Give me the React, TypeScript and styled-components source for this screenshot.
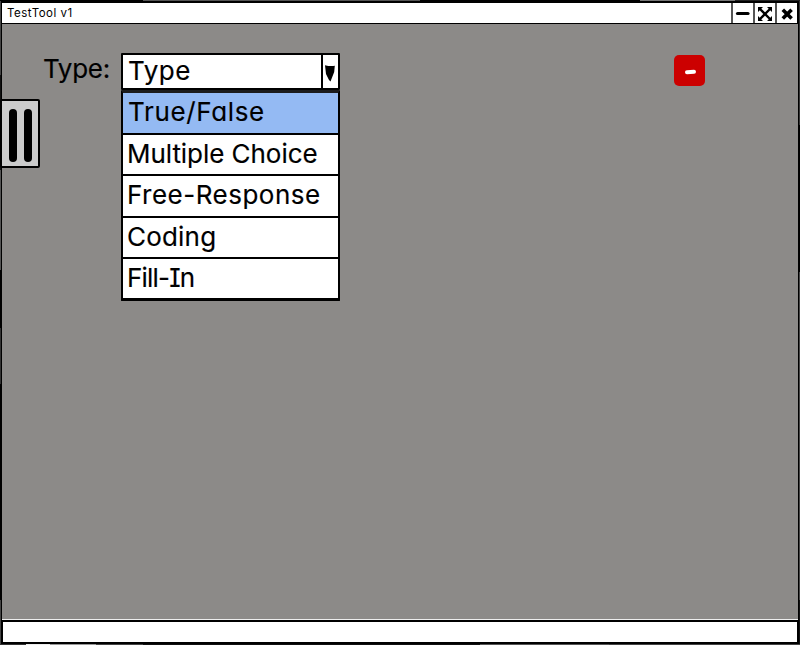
import React from 'react';
import styled, { createGlobalStyle } from 'styled-components';

const ink = '#000';
const surface = '#8c8a88';

const GlobalStyle = createGlobalStyle`
  * { box-sizing: border-box; }
  body {
    margin: 0;
    background: #fff;
    color: ${ink};
    font-family: Inter, Lato, sans-serif;
    font-feature-settings: 'cv11', 'cv08';
  }
`;

/* Uneven pen pressure around the outside of the window outline. */
const Frame = styled.div`
  width: 800px;
  height: 645px;
  padding: 1px;
  background:
    linear-gradient(90deg, #000 0 143px, #555 143px 420px, #000 420px 640px, #777 640px 735px, #222 735px) top / 100% 1px no-repeat,
    linear-gradient(90deg, #333 0 26px, #eee 26px 50px, #999 50px 96px, #444 96px 143px, #111 143px 480px, #555 480px 609px, #444 609px) bottom / 100% 1px no-repeat,
    linear-gradient(#444 0 75px, #111 75px 170px, #555 170px 270px, #000 270px 328px, #333 328px 384px, #000 384px 600px, #444 600px) left / 1px 100% no-repeat,
    linear-gradient(#333 0 125px, #000 125px 272px, #444 272px 600px, #111 600px) right / 1px 100% no-repeat,
    #000;
`;

const Window = styled.div`
  height: 643px;
  display: grid;
  grid-template-rows: 21px 1fr 24px;
  border: solid ${ink};
  border-width: 2px 1px 0;
  background: ${surface};
`;

const TitleBar = styled.header`
  display: flex;
  justify-content: space-between;
  background: #fff;
  border-bottom: 1px solid ${ink};
  border-right: 1px solid ${ink};
`;

const Title = styled.h1`
  margin: 0;
  padding-left: 5px;
  font-size: 11.5px;
  font-weight: 400;
  line-height: 21px;
  letter-spacing: 0.5px;
`;

const WindowButtons = styled.div`
  display: flex;
`;

const WindowButton = styled.button`
  width: 22px;
  padding: 2px 0 0;
  border: 0;
  border-left: 2px solid #555;
  background: #fff;
  display: grid;
  place-items: center;
  svg { display: block; }
`;

const Content = styled.main`
  display: flex;
  align-items: flex-start;
  border-bottom: 1px solid #eee;
`;

const DrawerHandle = styled.button`
  width: 40px;
  height: 69px;
  margin: 75px 0 0 -2px;
  padding: 8px 0 0 7px;
  border: 2px solid ${ink};
  border-radius: 2px;
  background: #cbcbcb;
  display: flex;
  gap: 7px;
`;

const HandleBar = styled.span`
  width: 8px;
  height: 53px;
  border-radius: 4px;
  background: ${ink};
`;

const FieldLabel = styled.label`
  width: 81px;
  margin-top: 29px;
  padding-left: 3px;
  white-space: nowrap;
`;

const SelectBox = styled.div`
  width: 219px;
  margin-top: 29px;
`;

const SelectField = styled.div`
  height: 37px;
  display: flex;
  justify-content: space-between;
  border: 2px solid ${ink};
  border-radius: 1px;
  background: #fff;
`;

const Text = styled.span<{ $tracking?: number }>`
  display: inline-block;
  font-size: 26px;
  line-height: 32px;
  white-space: nowrap;
  letter-spacing: ${({ $tracking = 0 }) => $tracking}px;
  -webkit-text-stroke: 0.15px ${ink};
`;

const SelectValue = styled.div`
  padding: 0 0 0 5px;
`;

const SelectArrow = styled.div`
  width: 17px;
  border-left: 2px solid ${ink};
  padding: 9px 0 0 1px;
  svg { display: block; }
`;

const Options = styled.ul`
  margin: 0;
  padding: 0;
  list-style: none;
  border: solid ${ink};
  border-width: 3px 2px;
  border-top-color: #1c1c1c;
  border-radius: 1px;
  background: #fff;
`;

const Option = styled.li<{ $active?: boolean }>`
  height: 41.6px;
  padding: 3px 0 0;
  padding-left: ${({ $active }) => ($active ? 5 : 4)}px;
  background: ${({ $active }) => ($active ? '#94baf3' : '#fff')};
  border-bottom: 2px solid ${ink};
  &:last-child { height: 38.4px; border-bottom: 0; }
`;

const RemoveButton = styled.button`
  width: 31px;
  height: 31px;
  margin: 31px 93px 0 auto;
  padding: 2px 0 0 1px;
  border: 0;
  border-radius: 5px;
  background: #cc0000;
  display: grid;
  place-items: center;
`;

const MinusMark = styled.span`
  width: 11px;
  height: 4px;
  border-radius: 2px;
  background: #fff;
  transform: rotate(-3deg);
`;

const StatusBar = styled.footer`
  border: solid ${ink};
  border-width: 2px 1px 2px;
  background: #fff;
`;

const options = [
  { label: 'True/False', tracking: 0.65 },
  { label: 'Multiple Choice', tracking: -0.05 },
  { label: 'Free-Response', tracking: 0.5 },
  { label: 'Coding', tracking: 0.2 },
  { label: 'Fill-In', tracking: -0.8 },
];

export default function App() {
  return (
    <>
      <GlobalStyle />
      <Frame>
        <Window>
          <TitleBar>
            <Title>TestTool v1</Title>
            <WindowButtons>
              <WindowButton aria-label="Minimize">
                <svg width="16" height="16" viewBox="0 0 16 16">
                  <path d="M2.5 7.5H13" stroke={ink} strokeWidth="3.2" strokeLinecap="round" />
                </svg>
              </WindowButton>
              <WindowButton aria-label="Maximize">
                <svg width="16" height="16" viewBox="0 0 16 16">
                  <path d="M3 3L13 13M13 3L3 13" stroke={ink} strokeWidth="2.4" />
                  <path d="M1 1H6L1 6ZM15 1V6L10 1ZM1 15V10L6 15ZM15 15H10L15 10Z" fill={ink} />
                </svg>
              </WindowButton>
              <WindowButton aria-label="Close">
                <svg width="16" height="16" viewBox="0 0 16 16">
                  <path d="M3.8 3.8L12.6 12.6M12.6 3.8L3.8 12.6" stroke={ink} strokeWidth="3.6" />
                </svg>
              </WindowButton>
            </WindowButtons>
          </TitleBar>
          <Content>
            <DrawerHandle aria-label="Open drawer">
              <HandleBar />
              <HandleBar />
            </DrawerHandle>
            <FieldLabel>
              <Text $tracking={-0.3}>Type:</Text>
            </FieldLabel>
            <SelectBox>
              <SelectField>
                <SelectValue>
                  <Text $tracking={0.5}>Type</Text>
                </SelectValue>
                <SelectArrow>
                  <svg width="12" height="18" viewBox="0 0 12 18">
                    <path d="M1 1.2Q6 2.5 10.8 1.8L10.2 8L6.5 17.5L5 16L2 10Z" fill={ink} />
                  </svg>
                </SelectArrow>
              </SelectField>
              <Options>
                {options.map((option, index) => (
                  <Option key={option.label} $active={index === 0}>
                    <Text $tracking={option.tracking}>{option.label}</Text>
                  </Option>
                ))}
              </Options>
            </SelectBox>
            <RemoveButton aria-label="Remove">
              <MinusMark />
            </RemoveButton>
          </Content>
          <StatusBar />
        </Window>
      </Frame>
    </>
  );
}
